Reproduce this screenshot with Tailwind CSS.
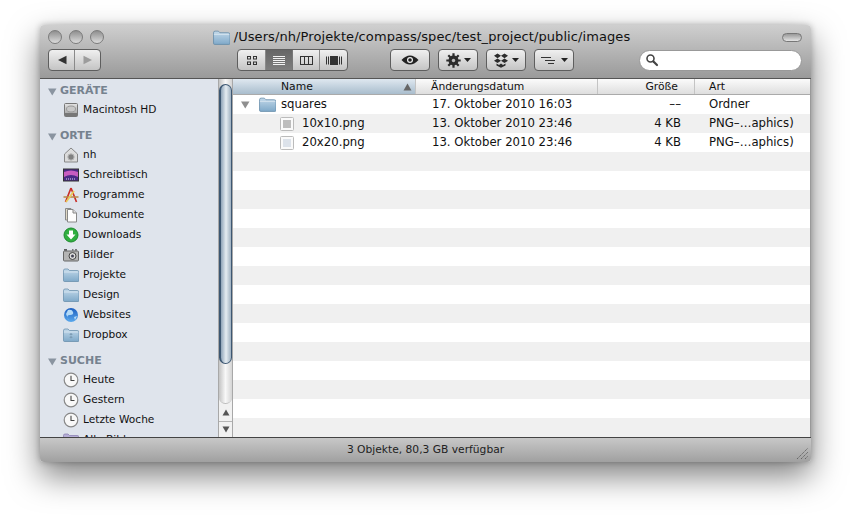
<!DOCTYPE html>
<html><head><meta charset="utf-8">
<script src="https://cdn.jsdelivr.net/npm/@tailwindcss/browser@4"></script>
</head>
<body class="w-[850px] h-[517px] bg-white overflow-hidden font-['DejaVu_Sans',sans-serif] text-[11px] text-[#111]">
<svg width="0" height="0" class="absolute">
 <defs>
  <linearGradient id="foldg" x1="0" y1="0" x2="0" y2="1"><stop offset="0" stop-color="#c2d8e9"/><stop offset="1" stop-color="#7fa9c9"/></linearGradient>
  <linearGradient id="hd" x1="0" y1="0" x2="0" y2="1"><stop offset="0" stop-color="#e4e4e4"/><stop offset="1" stop-color="#9a9a9a"/></linearGradient>
  <linearGradient id="globe" x1="0" y1="0" x2="0" y2="1"><stop offset="0" stop-color="#1d5fc0"/><stop offset="1" stop-color="#5aa8ec"/></linearGradient>
  <symbol id="folder" viewBox="0 0 16 14"><path d="M.5 2.500q0-1.500 1.500-1.500h3l1.500 1.500h7.500q2 0 2 1.500v8.500q0 1-1 1h-13.500q-1 0-1-1z" fill="url(#foldg)" stroke="#6088a6" stroke-width=".7"/><path d="M.8 4h14.400" stroke="#e4eef5" stroke-width=".7"/></symbol>
  <symbol id="clock" viewBox="0 0 16 16"><circle cx="8" cy="8" r="6.800" fill="#f8f8f8" stroke="#888" stroke-width="1.200"/><path d="M8 3.800V8.500H11.500" fill="none" stroke="#444" stroke-width="1.100"/></symbol>
 </defs>
</svg>
<div class="pt-[25px] pl-[40px]">
<div class="relative w-[771px] h-[437px] flex flex-col rounded-[4px] overflow-hidden shadow-[0_14px_32px_rgba(0,0,0,0.5),0_0_6px_rgba(0,0,0,0.25)]">

 <!-- toolbar -->
 <div class="h-[54px] shrink-0 bg-gradient-to-b from-[#cfcfcf] to-[#9a9a9a] border-b border-[#555] flex flex-col">
  <div class="h-[22px] flex items-center relative shrink-0 pt-[2px]">
   <div class="flex gap-[7px] pl-[8px]">
    <span class="w-[14px] h-[14px] rounded-full border border-[#7b7b7b] bg-gradient-to-b from-[#8f8f8f] to-[#dcdcdc]"></span>
    <span class="w-[14px] h-[14px] rounded-full border border-[#7b7b7b] bg-gradient-to-b from-[#8f8f8f] to-[#dcdcdc]"></span>
    <span class="w-[14px] h-[14px] rounded-full border border-[#7b7b7b] bg-gradient-to-b from-[#8f8f8f] to-[#dcdcdc]"></span>
   </div>
   <div class="flex-1 flex items-center justify-center gap-[4px] pr-[43px]">
    <svg width="17" height="15"><use href="#folder"/></svg>
    <span class="text-[13px] text-[#111] whitespace-nowrap tracking-[0.09px]">/Users/nh/Projekte/compass/spec/test_project/public/images</span>
   </div>
   <span class="w-[20px] h-[9px] mr-[9px] rounded-full border border-[#777] bg-gradient-to-b from-[#999] to-[#e4e4e4]"></span>
  </div>
  <div class="flex items-center h-[22px] pl-[8px] mt-[2px] relative">
   <div class="flex w-[53px] h-[22px] rounded-[4px] border border-[#5e5e5e] bg-gradient-to-b from-[#f0f0f0] to-[#c4c4c4]">
    <div class="w-[26px] flex items-center justify-center border-r border-[#8a8a8a]"><svg width="10" height="10"><path d="M1 5L9.500 .8V9.200z" fill="#333"/></svg></div>
    <div class="flex-1 flex items-center justify-center"><svg width="10" height="10"><path d="M9 5L.5 .8V9.200z" fill="#9c9c9c"/></svg></div>
   </div>
   <div class="flex ml-[136px] w-[111px] h-[22px] rounded-[4px] border border-[#5e5e5e] bg-gradient-to-b from-[#f0f0f0] to-[#c4c4c4] overflow-hidden">
    <div class="w-[28px] flex items-center justify-center border-r border-[#8a8a8a]"><svg width="12" height="11" fill="none" stroke="#333"><rect x="1.500" y="1.500" width="3" height="2.500"/><rect x="7.500" y="1.500" width="3" height="2.500"/><rect x="1.500" y="7" width="3" height="2.500"/><rect x="7.500" y="7" width="3" height="2.500"/></svg></div>
    <div class="w-[27px] flex items-center justify-center bg-gradient-to-b from-[#666] to-[#7e7e7e] border-r border-[#777]"><svg width="12" height="11" stroke="#f2f2f2"><path d="M0 1.500H12M0 3.500H12M0 5.500H12M0 7.500H12M0 9.500H12"/></svg></div>
    <div class="w-[27px] flex items-center justify-center border-r border-[#8a8a8a]"><svg width="13" height="11" fill="none" stroke="#333"><rect x=".5" y="1.500" width="12" height="8"/><path d="M4.500 1.500V9.500M8.500 1.500V9.500"/></svg></div>
    <div class="flex-1 flex items-center justify-center"><svg width="16" height="11"><path d="M.5 1.500V9.500M2.500 1.500V9.500M13.500 1.500V9.500M15.500 1.500V9.500" stroke="#333"/><rect x="4" y="1" width="8" height="9" fill="#333"/></svg></div>
   </div>
   <div class="ml-[42px] w-[40px] h-[22px] rounded-[4px] border border-[#5e5e5e] bg-gradient-to-b from-[#f0f0f0] to-[#c4c4c4] flex items-center justify-center"><svg width="18" height="12"><path d="M.5 6Q9-3 17.500 6 9 15 .5 6z" fill="#222"/><circle cx="9" cy="6" r="3" fill="#eee"/><circle cx="9" cy="6" r="1.800" fill="#222"/></svg></div>
   <div class="ml-[8px] w-[40px] h-[22px] rounded-[4px] border border-[#5e5e5e] bg-gradient-to-b from-[#f0f0f0] to-[#c4c4c4] flex items-center justify-center gap-[3px]"><svg width="15" height="15" viewBox="0 0 15 15"><circle cx="7.500" cy="7.500" r="5" fill="#2c2c2c"/><path d="M7.500 .3V14.700M.3 7.500H14.700M2.300 2.300L12.700 12.700M12.700 2.300L2.300 12.700" stroke="#2c2c2c" stroke-width="2.200"/><circle cx="7.500" cy="7.500" r="1.700" fill="#bbb"/></svg><svg width="7" height="4"><path d="M0 0H7L3.500 4z" fill="#222"/></svg></div>
   <div class="ml-[8px] w-[40px] h-[22px] rounded-[4px] border border-[#5e5e5e] bg-gradient-to-b from-[#f0f0f0] to-[#c4c4c4] flex items-center justify-center gap-[3px]"><svg width="16" height="15" viewBox="0 0 16 15" fill="#2c2c2c"><path d="M4.500 .5L8 2.800 4.500 5.200 1 2.800zM11.500 .5L15 2.800 11.500 5.200 8 2.800zM4.500 5.400L8 7.700 4.500 10 1 7.700zM11.500 5.400L15 7.700 11.500 10 8 7.700z"/><path d="M3.500 10.500L6 12 8 10.500 10 12 12.500 10.500V12.500L8 14.800 3.500 12.500z"/></svg><svg width="7" height="4"><path d="M0 0H7L3.500 4z" fill="#222"/></svg></div>
   <div class="ml-[8px] w-[40px] h-[22px] rounded-[4px] border border-[#5e5e5e] bg-gradient-to-b from-[#f0f0f0] to-[#c4c4c4] flex items-center justify-center gap-[3px]"><svg width="17" height="9"><path d="M0 1.500H10M4 4.500H14M7 7.500H13" stroke="#333"/></svg><svg width="7" height="4"><path d="M0 0H7L3.500 4z" fill="#222"/></svg></div>
   <div class="ml-[65px] w-[163px] h-[21px] rounded-full bg-white border border-[#999] flex items-center pl-[5px]"><svg width="14" height="14" fill="none" stroke="#444"><circle cx="5.500" cy="5.500" r="3.500" stroke-width="1.600"/><path d="M8.500 8.500L12 12" stroke-width="2.200" stroke-linecap="round"/></svg></div>
  </div>
 </div>

 <!-- middle -->
 <div class="flex-1 flex min-h-0">
  <!-- sidebar -->
  <div class="w-[178px] shrink-0 bg-[#dfe4ec] overflow-hidden pt-[4px] text-[10.6px]">
   <div class="h-[15px] mt-[1px] mb-[1px] flex items-center pl-[8px] gap-[3px] font-bold text-[11px] text-[#76828f]"><svg width="9" height="8"><path d="M0 .5H8.500L4.250 7.500z" fill="#8a94a0"/></svg>GERÄTE</div>
   <div class="h-[20px] flex items-center pl-[23px] gap-[4px]"><svg width="16" height="16" viewBox="0 0 16 16"><rect x="1.500" y="1.500" width="13" height="13" rx="1" fill="url(#hd)" stroke="#777"/><ellipse cx="8" cy="7" rx="4.500" ry="3" fill="#c8c8c8" stroke="#999"/><rect x="2" y="11" width="12" height="3" fill="#777"/></svg><span>Macintosh HD</span></div>

   <div class="h-[15px] mt-[9px] mb-[1px] flex items-center pl-[8px] gap-[3px] font-bold text-[11px] text-[#76828f]"><svg width="9" height="8"><path d="M0 .5H8.500L4.250 7.500z" fill="#8a94a0"/></svg>ORTE</div>
   <div class="h-[20px] flex items-center pl-[23px] gap-[4px]"><svg width="16" height="16" viewBox="0 0 16 16"><path d="M8 1L1.500 7V15H14.500V7z" fill="#dcdcdc" stroke="#888"/><circle cx="8" cy="10" r="3.200" fill="#808080" stroke="#bbb"/></svg><span>nh</span></div>
   <div class="h-[20px] flex items-center pl-[23px] gap-[4px]"><svg width="16" height="16" viewBox="0 0 16 16"><rect x=".5" y="2" width="15" height="12" fill="#4a2a86" stroke="#333"/><path d="M1 5Q8 2 15 5V10Q8 6 1 10z" fill="#c85cc0"/><path d="M3 12H13" stroke="#dde" stroke-dasharray="1 1"/></svg><span>Schreibtisch</span></div>
   <div class="h-[20px] flex items-center pl-[23px] gap-[4px]"><svg width="16" height="16" viewBox="0 0 16 16"><path d="M8 1L2.500 15M8 1L13.500 15" fill="none" stroke="#c9302a" stroke-width="1.700"/><path d="M.5 10H15.500" stroke="#b8884a" stroke-width="1.700"/><path d="M3 15L11 4" stroke="#e8c95a" stroke-width="1.800"/></svg><span>Programme</span></div>
   <div class="h-[20px] flex items-center pl-[23px] gap-[4px]"><svg width="16" height="16" viewBox="0 0 16 16"><path d="M2.500 1.500H8V13H2.500z" fill="#dfd8c4" stroke="#888"/><path d="M4.500 2.500H10L13.500 6V15H4.500z" fill="#fdfdfd" stroke="#888"/><path d="M10 2.500V6H13.500" fill="#ddd" stroke="#888"/></svg><span>Dokumente</span></div>
   <div class="h-[20px] flex items-center pl-[23px] gap-[4px]"><svg width="16" height="16" viewBox="0 0 16 16"><circle cx="8" cy="8" r="7" fill="#2fae3f" stroke="#1c8a2d"/><path d="M6 3.500H10V7.500H12.500L8 12.500 3.500 7.500H6z" fill="#fff"/></svg><span>Downloads</span></div>
   <div class="h-[20px] flex items-center pl-[23px] gap-[4px]"><svg width="16" height="16" viewBox="0 0 16 16"><rect x=".5" y="4" width="15" height="10" rx="1" fill="#b4b4b4" stroke="#666"/><path d="M1 2.800H4" stroke="#333" stroke-width="1.200"/><path d="M9 2.800H10.500M12 2.800H14" stroke="#555" stroke-width="1.200"/><circle cx="9.500" cy="9" r="3.500" fill="#ddd" stroke="#444"/><circle cx="9.500" cy="9" r="1.500" fill="#445"/></svg><span>Bilder</span></div>
   <div class="h-[20px] flex items-center pl-[23px] gap-[4px]"><svg width="16" height="16"><use href="#folder"/></svg><span>Projekte</span></div>
   <div class="h-[20px] flex items-center pl-[23px] gap-[4px]"><svg width="16" height="16"><use href="#folder"/></svg><span>Design</span></div>
   <div class="h-[20px] flex items-center pl-[23px] gap-[4px]"><svg width="16" height="16" viewBox="0 0 16 16"><circle cx="8" cy="8" r="7" fill="url(#globe)"/><path d="M5 3Q9 2 10 5T7 8 5 12 3 7z" fill="#b4daf7"/><path d="M11 10l3-1-2 4z" fill="#b4daf7"/></svg><span>Websites</span></div>
   <div class="h-[20px] flex items-center pl-[23px] gap-[4px]"><svg width="16" height="16" viewBox="0 0 16 14"><use href="#folder"/><path d="M8 5l1.800 1.200L8 7.400 6.200 6.200zM8 8l1.800 1.200L8 10.400 6.200 9.200z" fill="#7d9cb4"/></svg><span>Dropbox</span></div>

   <div class="h-[15px] mt-[9px] mb-[1px] flex items-center pl-[8px] gap-[3px] font-bold text-[11px] text-[#76828f]"><svg width="9" height="8"><path d="M0 .5H8.500L4.250 7.500z" fill="#8a94a0"/></svg>SUCHE</div>
   <div class="h-[20px] flex items-center pl-[23px] gap-[4px]"><svg width="16" height="16"><use href="#clock"/></svg><span>Heute</span></div>
   <div class="h-[20px] flex items-center pl-[23px] gap-[4px]"><svg width="16" height="16"><use href="#clock"/></svg><span>Gestern</span></div>
   <div class="h-[20px] flex items-center pl-[23px] gap-[4px]"><svg width="16" height="16"><use href="#clock"/></svg><span>Letzte Woche</span></div>
   <div class="h-[20px] flex items-center pl-[23px] gap-[4px]"><svg width="16" height="16" viewBox="0 0 16 14"><path d="M.5 2.500q0-1.500 1.500-1.500h3l1.500 1.500h7.500q2 0 2 1.500v8.500q0 1-1 1h-13.500q-1 0-1-1z" fill="#b6aed6" stroke="#8479ae" stroke-width=".7"/></svg><span>Alle Bilder</span></div>
  </div>
  <!-- scrollbar -->
  <div class="w-[15px] shrink-0 flex flex-col border-l border-r border-[#a8a8a8] bg-[#f1f1f1]">
   <div class="flex-1 min-h-0 flex flex-col rounded-b-[7px] border-b border-[#bbb] bg-gradient-to-r from-[#c4c4c4] via-[#f8f8f8] to-[#d4d4d4]">
    <div class="h-[5px] shrink-0"></div>
    <div class="h-[280px] shrink-0 rounded-[7px] border border-l-2 border-[#3d5772] bg-gradient-to-r from-[#8fa4b8] via-[#e6edf2] to-[#9fb1c1]"></div>
   </div>
   <div class="h-[17px] shrink-0 flex items-center justify-center"><svg width="8" height="7"><path d="M4 .5L7.500 6.500H.5z" fill="#555"/></svg></div>
   <div class="h-[16px] shrink-0 flex items-center justify-center border-t border-[#b5b5b5]"><svg width="8" height="7"><path d="M4 6.500L7.500 .5H.5z" fill="#555"/></svg></div>
  </div>
  <!-- list -->
  <div class="flex-1 min-w-0 flex flex-col bg-white border-r border-[#999] text-[11.7px]">
   <div class="h-[16px] shrink-0 flex border-b border-[#aaa] bg-gradient-to-b from-[#fbfbfb] to-[#dedede] text-[10.8px]">
    <div class="w-[183px] pt-[1px] flex items-center justify-between pl-[48px] pr-[3px] border-r border-[#c4c4c4] bg-gradient-to-b from-[#dfe8f0] to-[#a9bdcd]"><span>Name</span><svg width="9" height="8"><path d="M4.500 .5L8.500 7.500H.5z" fill="#666"/></svg></div>
    <div class="w-[182px] pt-[1px] flex items-center pl-[15px] border-r border-[#c4c4c4]">Änderungsdatum</div>
    <div class="w-[97px] pt-[1px] flex items-center justify-end pr-[16px] border-r border-[#c4c4c4]">Größe</div>
    <div class="flex-1 pt-[1px] flex items-center pl-[14px]">Art</div>
   </div>
   <div class="h-[19px] shrink-0 flex items-center pt-[1px]">
    <div class="w-[184px] flex items-center pl-[8px]"><svg width="9" height="8"><path d="M0 .5H8.500L4.250 7.500z" fill="#8f8f8f"/></svg><svg class="ml-[9px] mr-[5px]" width="17" height="15"><use href="#folder"/></svg>squares</div>
    <div class="w-[182px] pl-[15px]">17. Oktober 2010 16:03</div>
    <div class="w-[97px] text-right pr-[15px]">––</div>
    <div class="pl-[13px]">Ordner</div>
   </div>
   <div class="h-[19px] shrink-0 flex items-center pt-[1px] bg-[#f0f0f0]">
    <div class="w-[184px] flex items-center pl-[47px] gap-[8px]"><svg width="14" height="14"><rect x=".5" y=".5" width="13" height="13" rx="1" fill="#fafafa" stroke="#bbb"/><rect x="3" y="3" width="8" height="8" fill="#bdbdbd"/></svg>10x10.png</div>
    <div class="w-[182px] pl-[15px]">13. Oktober 2010 23:46</div>
    <div class="w-[97px] text-right pr-[15px]">4 KB</div>
    <div class="pl-[13px]">PNG–…aphics)</div>
   </div>
   <div class="h-[19px] shrink-0 flex items-center pt-[1px]">
    <div class="w-[184px] flex items-center pl-[47px] gap-[8px]"><svg width="14" height="14"><rect x=".5" y=".5" width="13" height="13" rx="1" fill="#fafafa" stroke="#bbb"/><rect x="3" y="3" width="8" height="8" fill="#dce2ea"/></svg>20x20.png</div>
    <div class="w-[182px] pl-[15px]">13. Oktober 2010 23:46</div>
    <div class="w-[97px] text-right pr-[15px]">4 KB</div>
    <div class="pl-[13px]">PNG–…aphics)</div>
   </div>
   <div class="h-[19px] shrink-0 bg-[#f0f0f0]"></div>
   <div class="h-[19px] shrink-0"></div>
   <div class="h-[19px] shrink-0 bg-[#f0f0f0]"></div>
   <div class="h-[19px] shrink-0"></div>
   <div class="h-[19px] shrink-0 bg-[#f0f0f0]"></div>
   <div class="h-[19px] shrink-0"></div>
   <div class="h-[19px] shrink-0 bg-[#f0f0f0]"></div>
   <div class="h-[19px] shrink-0"></div>
   <div class="h-[19px] shrink-0 bg-[#f0f0f0]"></div>
   <div class="h-[19px] shrink-0"></div>
   <div class="h-[19px] shrink-0 bg-[#f0f0f0]"></div>
   <div class="h-[19px] shrink-0"></div>
   <div class="h-[19px] shrink-0 bg-[#f0f0f0]"></div>
   <div class="h-[19px] shrink-0"></div>
   <div class="flex-1 bg-[#f0f0f0]"></div>
  </div>
 </div>

 <!-- status bar -->
 <div class="h-[25px] shrink-0 border-t border-[#444] bg-gradient-to-b from-[#c8c8c8] to-[#a0a0a0] flex items-center justify-center relative text-[10.7px]">
  <span class="text-[#222]">3 Objekte, 80,3 GB verfügbar</span>
  <svg class="absolute right-[3px] bottom-[3px]" width="12" height="12" stroke="#666"><path d="M1 12L12 1M5 12L12 5M9 12L12 9" stroke-dasharray="1.500 .7"/></svg>
 </div>
</div>
</div>
</body></html>
